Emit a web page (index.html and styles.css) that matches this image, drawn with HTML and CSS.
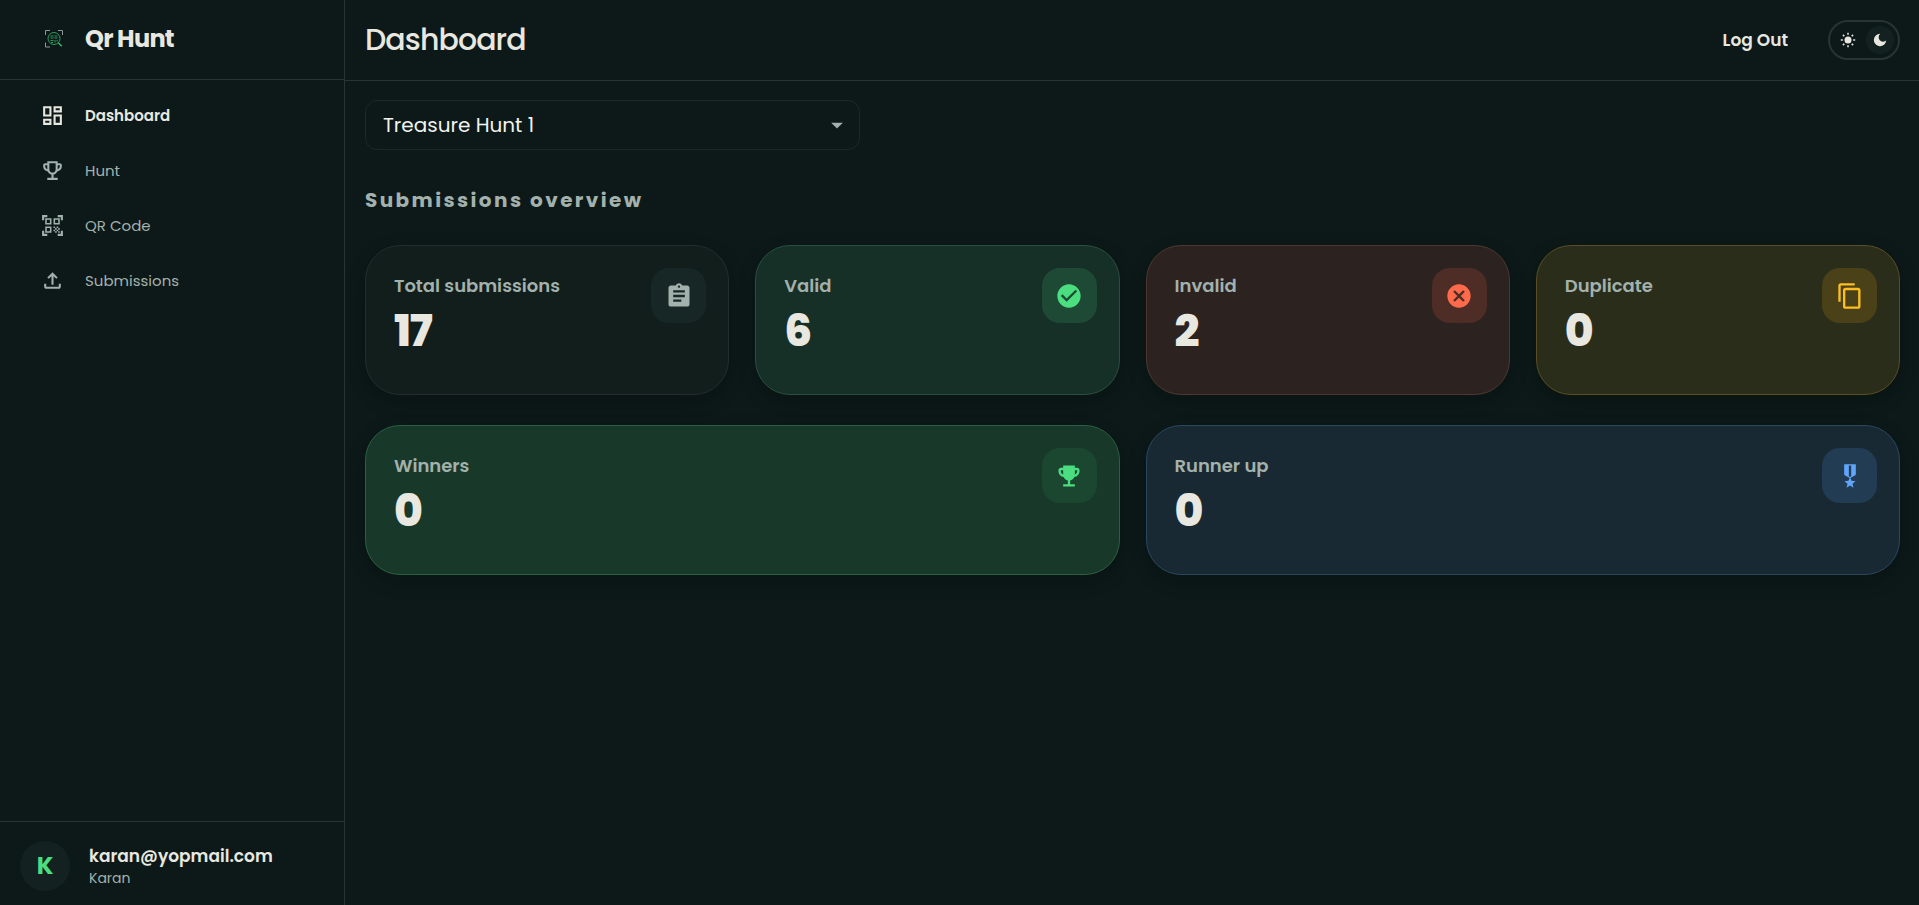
FILE: index.html
```
<!DOCTYPE html>
<html lang="en">
<head>
    <meta charset="UTF-8">
    <meta name="viewport" content="width=device-width, initial-scale=1.0">
    <title>Qr Hunt - Dashboard</title>
    <link rel="stylesheet" href="styles.css">
</head>
<body>
    <aside class="sidebar">
        <div class="brand">
            <svg class="brand-logo" viewBox="0 0 18 18" fill="none">
                <path d="M0.5 5V0.5H5M13 0.5h4.500V5M0.500 12.500V17H5" stroke="#8d9895"/>
                <circle cx="9" cy="8.500" r="6" stroke="#2f9a5e"/>
                <path d="M5.500 6h3M9.500 6h3M5.500 8h3M9.500 8h3M5.500 10.500h3M10 10v2.500M12 10v1.500M6 12.500h2" stroke="#2f9a5e"/>
                <path d="M13.200 12.700l3.600 3.600" stroke="#38b36d" stroke-width="1.500"/>
            </svg>
            <span class="brand-name">Qr Hunt</span>
        </div>

        <nav class="nav">
            <a href="#" class="nav-link active">
                <svg viewBox="0 0 24 24"><path d="M19 5v2h-4V5h4M9 5v6H5V5h4m10 8v6h-4v-6h4M9 17v2H5v-2h4M21 3h-8v6h8V3zM11 3H3v10h8V3zm10 8h-8v10h8V11zm-10 4H3v6h8v-6z"/></svg>
                Dashboard
            </a>
            <a href="#" class="nav-link">
                <svg viewBox="0 0 24 24"><path d="M19 5h-2V3H7v2H5c-1.100 0-2 .9-2 2v1c0 2.550 1.920 4.630 4.390 4.940.63 1.500 1.980 2.630 3.610 2.960V19H7v2h10v-2h-4v-3.100c1.630-.33 2.980-1.460 3.610-2.960C19.080 12.630 21 10.550 21 8V7c0-1.100-.9-2-2-2zM5 8V7h2v3.820C5.840 10.400 5 9.300 5 8zm7 6c-1.650 0-3-1.350-3-3V5h6v6c0 1.650-1.350 3-3 3zm7-6c0 1.300-.84 2.400-2 2.820V7h2v1z"/></svg>
                Hunt
            </a>
            <a href="#" class="nav-link">
                <svg viewBox="0 0 24 24"><path d="M9.500 6.500v3h-3v-3h3M11 5H5v6h6V5zm-1.500 9.500v3h-3v-3h3M11 13H5v6h6v-6zm6.500-6.500v3h-3v-3h3M19 5h-6v6h6V5zm-6 8h1.500v1.500H13V13zm1.500 1.500H16V16h-1.500v-1.500zM16 13h1.500v1.500H16V13zm-3 3h1.500v1.500H13V16zm1.500 1.500H16V19h-1.500v-1.500zM16 16h1.500v1.500H16V16zm1.500-1.500H19V16h-1.500v-1.500zm0 3H19V19h-1.500v-1.500zM22 7h-2V4h-3V2h5v5zm0 15v-5h-2v3h-3v2h5zM2 22h5v-2H4v-3H2v5zM2 2v5h2V4h3V2H2z"/></svg>
                QR Code
            </a>
            <a href="#" class="nav-link">
                <svg viewBox="0 0 24 24"><path d="M18 15v3H6v-3H4v3c0 1.100.9 2 2 2h12c1.100 0 2-.9 2-2v-3h-2zM7 9l1.410 1.410L11 7.830V16h2V7.830l2.590 2.580L17 9l-5-5-5 5z"/></svg>
                Submissions
            </a>
        </nav>

        <div class="user">
            <div class="avatar">K</div>
            <div>
                <div class="user-email">karan@yopmail.com</div>
                <div class="user-name">Karan</div>
            </div>
        </div>
    </aside>

    <div class="page">
        <header class="topbar">
            <h1>Dashboard</h1>
            <div class="topbar-actions">
                <button type="button" class="logout">Log Out</button>
                <button type="button" class="theme-toggle" aria-label="Dark mode" aria-pressed="true">
                    <span class="theme-option">
                        <svg viewBox="0 0 16 16">
                            <circle cx="8" cy="8" r="3.500"/>
                            <path d="M8 0.800v2M8 13.200v2M0.800 8h2M13.200 8h2M2.900 2.900l1.400 1.400M11.700 11.700l1.400 1.400M2.900 13.100l1.400-1.400M11.700 4.300l1.400-1.400" stroke="currentColor" stroke-width="1.500"/>
                        </svg>
                    </span>
                    <span class="theme-option selected">
                        <svg viewBox="0 0 16 16"><path d="M8.200 1.800A6.200 6.200 0 1 0 14.200 8.600 4.200 4.200 0 0 1 8.200 1.800z"/></svg>
                    </span>
                </button>
            </div>
        </header>

        <main>
            <div class="hunt-select">
                <select aria-label="Hunt">
                    <option>Treasure Hunt 1</option>
                </select>
                <svg viewBox="0 0 24 24"><path d="M7 10l5 5 5-5z"/></svg>
            </div>

            <h2>Submissions overview</h2>

            <div class="cards">
                <div class="card total">
                    <div>
                        <div class="card-label">Total submissions</div>
                        <div class="card-value">17</div>
                    </div>
                    <div class="card-icon">
                        <svg viewBox="0 0 24 24"><path d="M19 3h-4.180C14.400 1.840 13.300 1 12 1c-1.300 0-2.400.84-2.820 2H5c-1.100 0-2 .9-2 2v14c0 1.100.9 2 2 2h14c1.100 0 2-.9 2-2V5c0-1.100-.9-2-2-2zm-7 0c.55 0 1 .45 1 1s-.45 1-1 1-1-.45-1-1 .45-1 1-1zm2 14H7v-2h7v2zm3-4H7v-2h10v2zm0-4H7V7h10v2z"/></svg>
                    </div>
                </div>
                <div class="card valid">
                    <div>
                        <div class="card-label">Valid</div>
                        <div class="card-value">6</div>
                    </div>
                    <div class="card-icon">
                        <svg viewBox="0 0 24 24"><path d="M12 2C6.480 2 2 6.480 2 12s4.480 10 10 10 10-4.480 10-10S17.520 2 12 2zm-2 15l-5-5 1.410-1.410L10 14.170l7.590-7.590L19 8l-9 9z"/></svg>
                    </div>
                </div>
                <div class="card invalid">
                    <div>
                        <div class="card-label">Invalid</div>
                        <div class="card-value">2</div>
                    </div>
                    <div class="card-icon">
                        <svg viewBox="0 0 24 24"><path d="M12 2C6.470 2 2 6.470 2 12s4.470 10 10 10 10-4.470 10-10S17.530 2 12 2zm5 13.590L15.590 17 12 13.410 8.410 17 7 15.590 10.590 12 7 8.410 8.410 7 12 10.590 15.590 7 17 8.410 13.410 12 17 15.590z"/></svg>
                    </div>
                </div>
                <div class="card duplicate">
                    <div>
                        <div class="card-label">Duplicate</div>
                        <div class="card-value">0</div>
                    </div>
                    <div class="card-icon">
                        <svg viewBox="0 0 24 24"><path d="M16 1H4c-1.100 0-2 .9-2 2v14h2V3h12V1zm3 4H8c-1.100 0-2 .9-2 2v14c0 1.100.9 2 2 2h11c1.100 0 2-.9 2-2V7c0-1.100-.9-2-2-2zm0 16H8V7h11v14z"/></svg>
                    </div>
                </div>
                <div class="card wide winners">
                    <div>
                        <div class="card-label">Winners</div>
                        <div class="card-value">0</div>
                    </div>
                    <div class="card-icon">
                        <svg viewBox="0 0 24 24"><path d="M19 5h-2V3H7v2H5c-1.100 0-2 .9-2 2v1c0 2.550 1.920 4.630 4.390 4.940.63 1.500 1.980 2.630 3.610 2.960V19H7v2h10v-2h-4v-3.100c1.630-.33 2.980-1.460 3.610-2.960C19.080 12.630 21 10.550 21 8V7c0-1.100-.9-2-2-2zM5 8V7h2v3.820C5.840 10.400 5 9.300 5 8zm14 0c0 1.300-.84 2.400-2 2.820V7h2v1z"/></svg>
                    </div>
                </div>
                <div class="card wide runner-up">
                    <div>
                        <div class="card-label">Runner up</div>
                        <div class="card-value">0</div>
                    </div>
                    <div class="card-icon">
                        <svg viewBox="0 0 24 24"><path d="M17 10.430V2H7v8.430c0 .35.18.68.49.86l4.180 2.510-.99 2.340-3.410.29 2.590 2.240L9.070 22 12 20.230 14.930 22l-.78-3.330 2.590-2.240-3.410-.29-.99-2.340 4.180-2.510c.3-.18.48-.5.48-.86zm-4 1.800-1 .6-1-.6V3h2v9.230z"/></svg>
                    </div>
                </div>
            </div>
        </main>
    </div>
</body>
</html>
```

FILE: styles.css
```
* {
    box-sizing: border-box;
}
body {
    display: flex;
    min-height: 100vh;
    margin: 0;
    font-family: Poppins, Inter, sans-serif;
    background-color: #0c1918;
    color: #e8e8e0;
}
svg {
    display: block;
    fill: currentColor;
}
button {
    padding: 0;
    border: none;
    background: none;
    color: inherit;
    font-family: inherit;
    cursor: pointer;
}

/* sidebar */
.sidebar {
    display: flex;
    flex-direction: column;
    flex: none;
    width: 345px;
    border-right: 1px solid #283433;
}
.brand {
    display: flex;
    align-items: center;
    gap: 22px;
    height: 80px;
    padding: 0 45px 2px;
    border-bottom: 1px solid #283433;
}
.brand-logo {
    width: 18px;
    height: 18px;
    fill: none;
}
.brand-name {
    font-size: 24px;
    font-weight: 700;
    letter-spacing: -0.03em;
}
.nav {
    display: flex;
    flex-direction: column;
    gap: 5px;
    padding: 10px 0;
}
.nav-link {
    display: flex;
    align-items: center;
    gap: 20px;
    height: 50px;
    padding: 0 40px;
    color: #a3b1ac;
    font-size: 15px;
    text-decoration: none;
}
.nav-link svg {
    width: 25px;
    height: 25px;
}
.nav-link.active {
    color: #e8e8e0;
    font-weight: 600;
}
.user {
    display: flex;
    align-items: center;
    gap: 19px;
    height: 84px;
    margin-top: auto;
    padding: 4px 20px 0;
    border-top: 1px solid #283433;
}
.avatar {
    display: flex;
    align-items: center;
    justify-content: center;
    width: 50px;
    height: 50px;
    border-radius: 50%;
    background-color: #132220;
    color: #4ade80;
    font-size: 24px;
    font-weight: 700;
}
.user-email {
    font-size: 17px;
    font-weight: 600;
    line-height: 24px;
}
.user-name {
    color: #a3b1ac;
    font-size: 14px;
    line-height: 20px;
}

/* top bar */
.page {
    flex: 1;
    min-width: 0;
}
.topbar {
    display: flex;
    align-items: center;
    justify-content: space-between;
    height: 81px;
    padding: 0 19px 0 20px;
    border-bottom: 1px solid #283433;
}
h1 {
    margin: 0;
    font-size: 30px;
    font-weight: 500;
    letter-spacing: -0.03em;
}
.topbar-actions {
    display: flex;
    align-items: center;
    gap: 40px;
}
.logout {
    font-size: 17px;
    font-weight: 600;
}
.theme-toggle {
    display: flex;
    align-items: center;
    justify-content: space-between;
    width: 72px;
    height: 40px;
    padding: 0 4px;
    border: 2px solid #283433;
    border-radius: 20px;
}
.theme-option {
    display: flex;
    align-items: center;
    justify-content: center;
    width: 28px;
    height: 28px;
    border-radius: 50%;
}
.theme-option svg {
    width: 16px;
    height: 16px;
}
.theme-option.selected {
    background-color: #132220;
}

/* content */
main {
    padding: 19px 19px 30px 20px;
}
.hunt-select {
    position: relative;
    width: 495px;
    max-width: 100%;
}
.hunt-select select {
    appearance: none;
    width: 100%;
    height: 50px;
    padding: 0 48px 0 17px;
    border: 1px solid #1b2927;
    border-radius: 12px;
    background-color: #0c1918;
    color: #f1f3ef;
    font-family: inherit;
    font-size: 20px;
}
.hunt-select svg {
    position: absolute;
    top: 11px;
    right: 9px;
    width: 28px;
    height: 28px;
    color: #a3b1ac;
    pointer-events: none;
}
h2 {
    margin: 35px 0 30px;
    color: #a3b1ac;
    font-size: 20px;
    font-weight: 700;
    letter-spacing: 0.12em;
    line-height: 30px;
}
.cards {
    display: grid;
    grid-template-columns: repeat(4, 1fr);
    gap: 30px 26px;
}
.card {
    display: flex;
    justify-content: space-between;
    min-height: 150px;
    padding: 22px 22px 22px 28px;
    border: 1px solid #212e2b;
    border-radius: 35px;
    background-color: #111e1b;
    box-shadow: 0 6px 18px rgba(0, 0, 0, 0.22);
}
.card.wide {
    grid-column: span 2;
}
.card-label {
    margin-top: 4px;
    color: #a3b1ac;
    font-size: 18px;
    font-weight: 600;
    line-height: 28px;
}
.card-value {
    margin-top: 5px;
    font-size: 44px;
    font-weight: 800;
    letter-spacing: -0.03em;
    line-height: 52px;
}
.card-icon {
    display: flex;
    align-items: center;
    justify-content: center;
    flex: none;
    width: 55px;
    height: 55px;
    border-radius: 18px;
    background-color: #172725;
    color: #a3b1ac;
}
.card-icon svg {
    width: 28px;
    height: 28px;
}
.valid {
    border-color: #285040;
    background-color: #173027;
}
.valid .card-icon {
    background-color: #1e4a35;
    color: #4ade80;
}
.invalid {
    border-color: #4e3730;
    background-color: #2c2321;
}
.invalid .card-icon {
    background-color: #4d2d25;
    color: #ff6b4a;
}
.duplicate {
    border-color: #5a4e24;
    background-color: #2b2d1b;
}
.duplicate .card-icon {
    background-color: #4a4119;
    color: #fbbf24;
}
.winners {
    border-color: #2a6044;
    background-color: #18392a;
}
.winners .card-icon {
    background-color: #1b4630;
    color: #4ade80;
}
.runner-up {
    border-color: #2b4760;
    background-color: #182933;
}
.runner-up .card-icon {
    background-color: #223c54;
    color: #60a5fa;
}
```
